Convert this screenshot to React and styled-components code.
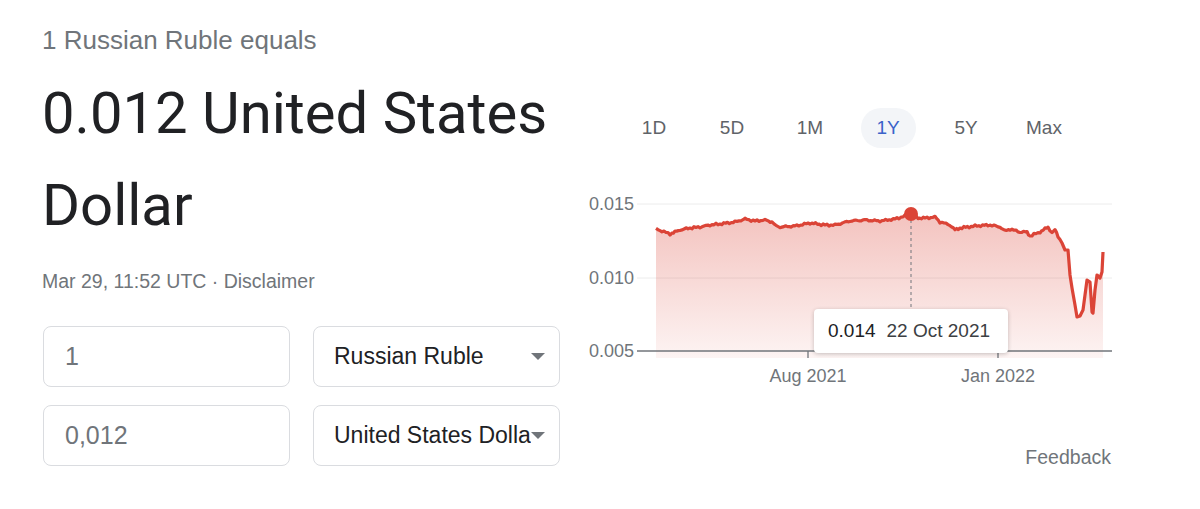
import React from 'react';
import styled, { createGlobalStyle } from 'styled-components';

const GlobalStyle = createGlobalStyle`
  html, body {
    margin: 0;
    padding: 0;
    background: #fff;
  }
  body {
    font-family: "Liberation Sans", Arial, sans-serif;
  }
`;

const RANGES = ['1D', '5D', '1M', '1Y', '5Y', 'Max'];

// key points of the 1Y line, in page coordinates
const KEYS = [
  [656, 229], [662, 231], [670, 234], [675, 232], [680, 230], [690, 228],
  [700, 227], [710, 225], [720, 224], [735, 222], [745, 219], [755, 221],
  [765, 220], [772, 222], [776, 226], [780, 227], [795, 226], [810, 223],
  [825, 225], [835, 225], [850, 221], [865, 220], [880, 221], [895, 219],
  [905, 216], [911, 214], [918, 218], [925, 218], [935, 217], [940, 222],
  [950, 225], [955, 230], [960, 228], [975, 226], [990, 225], [1000, 227],
  [1005, 231], [1010, 229], [1020, 232], [1027, 232], [1030, 236], [1040, 232],
  [1045, 229], [1048, 227], [1052, 233], [1055, 230], [1058, 236], [1062, 243],
  [1065, 250], [1068, 250], [1070, 275], [1072, 288], [1075, 305], [1077, 317],
  [1080, 316], [1083, 310], [1087, 280], [1090, 282], [1092, 312], [1093, 313],
  [1095, 290], [1097, 275], [1100, 278], [1102, 272], [1103, 252],
];

const buildLine = () => {
  const pts = [];
  for (let i = 0; i < KEYS.length - 1; i++) {
    const [x0, y0] = KEYS[i];
    const [x1, y1] = KEYS[i + 1];
    const steps = Math.max(1, Math.round((x1 - x0) / 2));
    for (let s = 0; s < steps; s++) {
      const t = s / steps;
      const x = x0 + (x1 - x0) * t;
      let y = y0 + (y1 - y0) * t;
      if (x < 1060 && Math.abs(x - 911) > 3) {
        y += (Math.sin(x * 1.7) + Math.sin(x * 0.63)) * 0.6;
      }
      pts.push([x, y]);
    }
  }
  pts.push(KEYS[KEYS.length - 1]);
  return pts;
};

const LINE = buildLine();
const LINE_D = LINE.map(([x, y], i) => `${i ? 'L' : 'M'}${x.toFixed(1)},${y.toFixed(1)}`).join(' ');
const AREA_D = `${LINE_D} L1103,358 L656,358 Z`;

const Chart = () => (
  <svg width="540" height="205" viewBox="580 190 540 205">
    <defs>
      <linearGradient id="area" x1="0" y1="214" x2="0" y2="358" gradientUnits="userSpaceOnUse">
        <stop offset="0" stopColor="#db4437" stopOpacity="0.32" />
        <stop offset="1" stopColor="#db4437" stopOpacity="0.06" />
      </linearGradient>
    </defs>
    <line x1="637" y1="204" x2="1112" y2="204" stroke="#ececec" strokeWidth="1" />
    <line x1="637" y1="278" x2="1112" y2="278" stroke="#ececec" strokeWidth="1" />
    <path d={AREA_D} fill="url(#area)" />
    <line x1="637" y1="351" x2="1112" y2="351" stroke="#70757a" strokeWidth="1.3" />
    <line x1="808" y1="351" x2="808" y2="358" stroke="#70757a" strokeWidth="1.3" />
    <line x1="998" y1="351" x2="998" y2="358" stroke="#70757a" strokeWidth="1.3" />
    <path d={LINE_D} fill="none" stroke="#db4437" strokeWidth="3.2" strokeLinejoin="round" />
    <line x1="911" y1="214" x2="911" y2="312" stroke="#70757a" strokeWidth="1" strokeDasharray="3 3" />
    <circle cx="911" cy="214" r="7" fill="#db4437" />
    <g fontFamily="Liberation Sans, Arial, sans-serif" fontSize="18" fill="#70757a">
      <text x="634" y="210" textAnchor="end">0.015</text>
      <text x="634" y="284" textAnchor="end">0.010</text>
      <text x="634" y="357" textAnchor="end">0.005</text>
      <text x="808" y="382" textAnchor="middle">Aug 2021</text>
      <text x="998" y="382" textAnchor="middle">Jan 2022</text>
    </g>
  </svg>
);

const Caret = () => (
  <svg width="14" height="7" viewBox="0 0 14 7">
    <path d="M0 0 L14 0 L7 7 Z" fill="#70757a" />
  </svg>
);

const App = () => (
  <>
    <GlobalStyle />
    <Page>
      <LeftCol>
        <Equals>1 Russian Ruble equals</Equals>
        <Result>0.012 United States Dollar</Result>
        <Stamp>Mar 29, 11:52 UTC · Disclaimer</Stamp>
        <Converter>
          <AmountBox>1</AmountBox>
          <CurrencyBox>
            <CurrencyText>Russian Ruble</CurrencyText>
            <Caret />
          </CurrencyBox>
          <AmountBox>0,012</AmountBox>
          <CurrencyBox>
            <CurrencyText>United States Dollar</CurrencyText>
            <Caret />
          </CurrencyBox>
        </Converter>
      </LeftCol>
      <RightCol>
        <Tabs>
          {RANGES.map((r) => (
            <Tab key={r}>
              <TabLabel $active={r === '1Y'}>{r}</TabLabel>
            </Tab>
          ))}
        </Tabs>
        <ChartWrap>
          <Chart />
          <Tooltip>
            <TipValue>0.014</TipValue>
            <TipDate>22 Oct 2021</TipDate>
          </Tooltip>
        </ChartWrap>
        <FeedbackRow>
          <Feedback>Feedback</Feedback>
        </FeedbackRow>
      </RightCol>
    </Page>
  </>
);

const Page = styled.div`
  display: flex;
  width: 1200px;
  height: 509px;
  box-sizing: border-box;
  padding-left: 42px;
  overflow: hidden;
`;
const LeftCol = styled.div`
  width: 519px;
  flex: none;
`;
const Equals = styled.div`
  margin-top: 25px;
  font-size: 26px;
  line-height: 30px;
  color: #70757a;
`;
const Result = styled.div`
  margin-top: 12px;
  font-family: Roboto, "Liberation Sans", sans-serif;
  font-size: 58px;
  line-height: 92px;
  color: #202124;
`;
const Stamp = styled.div`
  margin-top: 18px;
  font-size: 19.5px;
  line-height: 24px;
  color: #70757a;
`;
const Converter = styled.div`
  display: grid;
  grid-template-columns: 247px 247px;
  column-gap: 23px;
  row-gap: 18px;
  margin-top: 33px;
  margin-left: 1px;
`;
const Box = styled.div`
  box-sizing: border-box;
  height: 61px;
  border: 1px solid #dadce0;
  border-radius: 8px;
  display: flex;
  align-items: center;
  background: #fff;
`;
const AmountBox = styled(Box)`
  padding-left: 21px;
  font-size: 25px;
  color: #70757a;
`;
const CurrencyBox = styled(Box)`
  padding: 0 14px 0 20px;
  font-size: 23px;
  color: #202124;
  svg {
    flex: none;
  }
`;
const CurrencyText = styled.div`
  flex: 1;
  overflow: hidden;
  white-space: nowrap;
`;
const RightCol = styled.div`
  width: 540px;
  margin-left: 19px;
  flex: none;
`;
const Tabs = styled.div`
  display: flex;
  margin-top: 108px;
  padding-left: 35px;
  height: 40px;
`;
const Tab = styled.div`
  width: 78px;
  display: flex;
  justify-content: center;
`;
const TabLabel = styled.div`
  width: 55px;
  height: 40px;
  border-radius: 20px;
  display: flex;
  align-items: center;
  justify-content: center;
  font-size: 19px;
  color: ${({ $active }) => ($active ? '#3b63c9' : '#5f6368')};
  background: ${({ $active }) => ($active ? '#f3f5f8' : 'transparent')};
`;
const ChartWrap = styled.div`
  position: relative;
  margin-top: 42px;
  height: 205px;
  svg {
    display: block;
  }
`;
const Tooltip = styled.div`
  position: absolute;
  left: 234px;
  top: 119px;
  width: 194px;
  height: 44px;
  box-sizing: border-box;
  padding-left: 14px;
  display: flex;
  align-items: center;
  gap: 11px;
  background: #fff;
  border-radius: 4px;
  box-shadow: 0 1px 4px rgba(0, 0, 0, 0.22);
  font-size: 19px;
`;
const TipValue = styled.span`
  color: #202124;
`;
const TipDate = styled.span`
  color: #3c4043;
`;
const FeedbackRow = styled.div`
  display: flex;
  justify-content: flex-end;
  padding-right: 9px;
  margin-top: 51px;
`;
const Feedback = styled.div`
  font-size: 19.5px;
  line-height: 22px;
  color: #70757a;
`;

export default App;
